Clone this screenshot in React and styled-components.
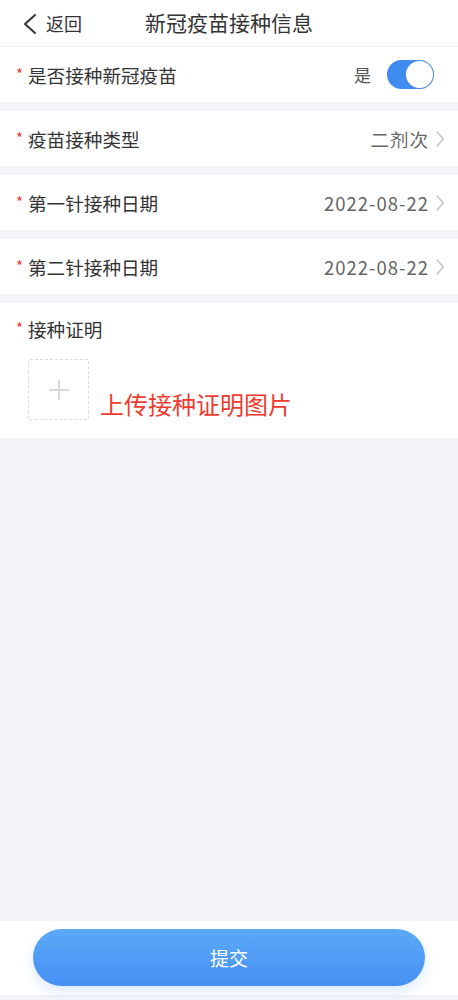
import React, { useState } from 'react'
import styled, { createGlobalStyle } from 'styled-components'

const GlobalStyle = createGlobalStyle`
    * { box-sizing: border-box; }
    body {
        margin: 0;
        background: #f4f4f8;
        font-family: "Noto Sans CJK SC", "Noto Sans", sans-serif;
        color: #333;
    }
`

const fields = [
    { label: '疫苗接种类型', value: '二剂次' },
    { label: '第一针接种日期', value: '2022-08-22' },
    { label: '第二针接种日期', value: '2022-08-22' },
]

const BackIcon = () => (
    <svg width="16" height="22" viewBox="0 0 16 22">
        <polyline points="13,2 3,11 13,20" fill="none" stroke="#333" strokeWidth="2" strokeLinecap="round" strokeLinejoin="round" />
    </svg>
)

const ArrowIcon = () => (
    <svg width="10" height="18" viewBox="0 0 10 18">
        <polyline points="2,2 8.5,9 2,16" fill="none" stroke="#c4c5c9" strokeWidth="1.6" strokeLinecap="round" strokeLinejoin="round" />
    </svg>
)

export default function App() {
    const [vaccinated, setVaccinated] = useState(true)

    return (
        <>
            <GlobalStyle />
            <Page>
                <Header>
                    <Back>
                        <BackIcon />
                        <span>返回</span>
                    </Back>
                    <Title>新冠疫苗接种信息</Title>
                </Header>

                <Row>
                    <Label>是否接种新冠疫苗</Label>
                    <Value>
                        <SwitchText>{vaccinated ? '是' : '否'}</SwitchText>
                        <Switch $on={vaccinated} onClick={() => setVaccinated(!vaccinated)}>
                            <Knob $on={vaccinated} />
                        </Switch>
                    </Value>
                </Row>

                {fields.map((item, index) => (
                    <Row key={index}>
                        <Label>{item.label}</Label>
                        <Value>
                            <ValueText>{item.value}</ValueText>
                            <ArrowIcon />
                        </Value>
                    </Row>
                ))}

                <UploadSection>
                    <Label>接种证明</Label>
                    <UploadRow>
                        <UploadBox>
                            <svg width="22" height="22" viewBox="0 0 22 22">
                                <path d="M11 1v20M1 11h20" stroke="#d6d8dc" strokeWidth="2" />
                            </svg>
                        </UploadBox>
                        <UploadHint>上传接种证明图片</UploadHint>
                    </UploadRow>
                </UploadSection>

                <Spacer />

                <Footer>
                    <SubmitButton>提交</SubmitButton>
                </Footer>
            </Page>
        </>
    )
}

const Page = styled.div`
    min-height: 100vh;
    display: flex;
    flex-direction: column;
    padding-bottom: 5px;
`

const Header = styled.header`
    position: relative;
    height: 47px;
    background: #fff;
    border-bottom: 1px solid #eeeef2;
    display: flex;
    align-items: center;
    justify-content: center;
`

const Back = styled.div`
    position: absolute;
    left: 22px;
    top: 0;
    height: 46px;
    display: flex;
    align-items: center;
    gap: 8px;
    font-size: 18px;
    color: #333;

    svg {
        margin-top: 1px;
    }
`

const Title = styled.h1`
    margin: 0;
    font-size: 21px;
    font-weight: 400;
    color: #333;
    margin-top: -2px;
`

const Row = styled.div`
    height: 55px;
    background: #fff;
    margin-bottom: 9px;
    padding: 0 13px 0 16px;
    display: flex;
    align-items: center;
    justify-content: space-between;
`

const Label = styled.div`
    font-size: 18.6px;
    color: #333;
    display: flex;
    align-items: center;

    &::before {
        content: '*';
        color: #ee3a3a;
        font-size: 15px;
        width: 12px;
        margin-top: -3px;
    }
`

const Value = styled.div`
    display: flex;
    align-items: center;
    gap: 6px;
`

const ValueText = styled.span`
    font-size: 18.5px;
    color: #666;
    letter-spacing: 1px;
`

const SwitchText = styled.span`
    font-size: 17px;
    color: #555;
    margin-right: 10px;
`

const Switch = styled.div`
    width: 47px;
    height: 29px;
    border-radius: 15px;
    background: ${props => props.$on ? '#3f8cf0' : '#e5e5ea'};
    display: flex;
    align-items: center;
    justify-content: ${props => props.$on ? 'flex-end' : 'flex-start'};
    padding: 1px;
    margin-right: 11px;
    cursor: pointer;
`

const Knob = styled.div`
    width: 27px;
    height: 27px;
    border-radius: 50%;
    background: #fff;
    box-shadow: 0 0 0 1px rgba(120, 160, 220, 0.35), 0 1px 2px rgba(0, 0, 0, 0.12);
`

const UploadSection = styled.section`
    background: #fff;
    padding: 12px 16px 18px;
`

const UploadRow = styled.div`
    display: flex;
    align-items: flex-end;
    gap: 11px;
    margin-top: 17px;
    padding-left: 12px;
`

const UploadBox = styled.div`
    width: 61px;
    height: 61px;
    border: 1px dashed #dcdde0;
    border-radius: 2px;
    display: flex;
    align-items: center;
    justify-content: center;
`

const UploadHint = styled.span`
    font-size: 24px;
    color: #ee3b30;
    line-height: 1;
    margin-bottom: 4px;
`

const Spacer = styled.div`
    flex: 1;
`

const Footer = styled.footer`
    height: 74px;
    background: #fff;
    display: flex;
    align-items: center;
    justify-content: center;
    padding-bottom: 2px;
`

const SubmitButton = styled.button`
    width: 392px;
    height: 57px;
    border: none;
    border-radius: 29px;
    background: linear-gradient(180deg, #5ca9f8 0%, #4690f3 100%);
    box-shadow: 0 6px 12px rgba(70, 144, 243, 0.18);
    color: #fff;
    font-family: inherit;
    font-size: 19px;
    cursor: pointer;
`
